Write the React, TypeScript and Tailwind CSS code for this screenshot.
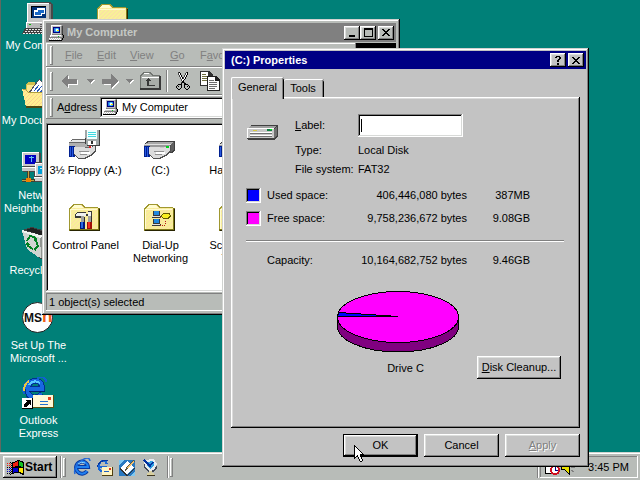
import type { ReactNode } from "react";

const raised =
  "shadow-[inset_-1px_-1px_0_#000,inset_1px_1px_0_#fff,inset_-2px_-2px_0_#808080,inset_2px_2px_0_#dcdedc]";
const frame =
  "shadow-[inset_-1px_-1px_0_#000,inset_1px_1px_0_#d0d2d0,inset_-2px_-2px_0_#808080,inset_2px_2px_0_#fff]";
const sunken =
  "shadow-[inset_-1px_-1px_0_#fff,inset_1px_1px_0_#808080,inset_-2px_-2px_0_#d8dad8,inset_2px_2px_0_#000]";
const thinSunken = "shadow-[inset_-1px_-1px_0_#fff,inset_1px_1px_0_#808080]";
const thinRaised = "shadow-[inset_-1px_-1px_0_#808080,inset_1px_1px_0_#fff]";

const palette: Record<string, string> = {
  k: "#000000",
  w: "#ffffff",
  g: "#808080",
  s: "#c0c0c0",
  d: "#404040",
  b: "#0000d0",
  n: "#000080",
  c: "#40c0f0",
  l: "#2878e0",
  r: "#f02010",
  e: "#10c020",
  y: "#ffe800",
  t: "#f0e8b0",
};

function Pixels({ rows, className = "" }: { rows: string[]; className?: string }) {
  const w = Math.max(...rows.map((r) => r.length));
  return (
    <svg
      width={w}
      height={rows.length}
      viewBox={`0 0 ${w} ${rows.length}`}
      shapeRendering="crispEdges"
      className={`shrink-0 ${className}`}
      aria-hidden="true"
    >
      {rows.flatMap((row, y) =>
        row
          .split("")
          .map((ch, x) =>
            palette[ch] ? <rect key={`${x}-${y}`} x={x} y={y} width={1} height={1} fill={palette[ch]} /> : null,
          ),
      )}
    </svg>
  );
}

function Art({ w = 32, h = 32, children }: { w?: number; h?: number; children: ReactNode }) {
  return (
    <svg width={w} height={h} viewBox={`0 0 ${w} ${h}`} shapeRendering="crispEdges" className="shrink-0" aria-hidden="true">
      {children}
    </svg>
  );
}

const closeRows = ["kk....kk", ".kk..kk.", "..kkkk..", "...kk...", "..kkkk..", ".kk..kk.", "kk....kk"];
const helpRows = [".kkkk.", "kk..kk", "....kk", "...kk.", "..kk..", "..kk..", "......", "..kk..", "..kk.."];
const maxRows = ["kkkkkkkkk", "kkkkkkkkk", "k.......k", "k.......k", "k.......k", "k.......k", "k.......k", "k.......k", "kkkkkkkkk"];
const minRows = ["......", "......", "......", "......", "......", "......", "......", "kkkkkk", "kkkkkk"];

const smallPcRows = [
  "..wwwwwwwwwwsg..",
  "..wsssssssssgd..",
  "..wsnnnnnnnsgd..",
  "..wsnllcclnsgd..",
  "..wsnlcwwcnsgd..",
  "..wsnlcwyynsgd..",
  "..wsnllcclnsgd..",
  "..wsnnnnnnnsgd..",
  "..wsssssssssgd..",
  "..wggggggggggk..",
  ".wwwwwwwwwwwsgk.",
  ".wsssssssesssgk.",
  ".gggggggggggggk.",
  "wswswswswswsgk..",
  "swswswswswswgk..",
  "kkkkkkkkkkkkk...",
];

const cursorRows = [
  "k..........",
  "kk.........",
  "kwk........",
  "kwwk.......",
  "kwwwk......",
  "kwwwwk.....",
  "kwwwwwk....",
  "kwwwwwwk...",
  "kwwwwwwwk..",
  "kwwwwwkkkk.",
  "kwwkwwk....",
  "kwkkwwk....",
  "kk..kwwk...",
  "k...kwwk...",
  ".....kwwk..",
  ".....kwwk..",
  "......kk...",
];

const cutRows = [
  "..dk......dk...",
  "..dwk....dwk...",
  "..dwk....dwk...",
  "...dwk..dwk....",
  "...dwk..dwk....",
  "....dwkdwk.....",
  "....dwkdwk.....",
  ".....dwwk......",
  ".....dwk.......",
  "......kk.......",
  ".....dkkd......",
  ".....k..kk.....",
  "..kkkk..kkkk...",
  ".k...k..k...k..",
  "k.k..k..k..k.k.",
  "k....k..k....k.",
  ".k..k....k..k..",
  "..kk......kk...",
];

const flagRows = [
  "..........kkk....",
  "........kkrkekkk.",
  "...k.kkkrrrkeeekk",
  "r.r.kkrrrrrkeeeek",
  "...r.krrrrrkeeeek",
  "r.r.kkrrrrrkeeeek",
  "...r.krrkkkkkkeek",
  "k.k.kkkkkkkkkkkkk",
  "...b.kbbbbbkyyyyk",
  "b.b.kkbbbbbkyyyyk",
  "...b.kbbbbbkyyyyk",
  "b.b.kkbbbbbkyyyyk",
  "...k.kbkkkkkkkyyk",
  "k.k.kkk......kkkk",
  "...k...........kk",
];

function Computer() {
  return (
    <Art>
      <path d="M8 0h20l3 2v20l-2 4H6V2z" fill="#484848" />
      <path d="M5 1h22v19H5z" fill="#c8c8c8" />
      <path d="M5 1h22v1H6v18H5z" fill="#fff" />
      <path d="M27 2h2v17h-2z" fill="#808080" />
      <path d="M9 4h15v12H9z" fill="#003078" />
      <path d="M9 4h15v1H10v11H9z" fill="#000" />
      <path d="M12 8h8v6h-8zM15 6h8v6h-8z" fill="#fff" />
      <path d="M13 10h6v3h-6zM16 8h6v3h-6z" fill="#1868c8" />
      <path d="M4 20h24v6H4z" fill="#b8b8b8" />
      <path d="M4 20h24v1H5v5H4z" fill="#fff" />
      <path d="M7 22h2v1H7z" fill="#00c000" />
      <path d="M18 22h8v1h-8zM18 24h8v1h-8z" fill="#606060" />
      <path d="M28 20h1v6h-1z" fill="#303030" />
      <path d="M3 26h24l-3 6H0z" fill="#404040" />
      <path d="M4 27.500h21M3 29.500h21M1 31h21" stroke="#e8e8e8" strokeDasharray="2 1" />
    </Art>
  );
}

function Dither({ id, a, b }: { id: string; a: string; b: string }) {
  return (
    <pattern id={id} width="4" height="4" patternUnits="userSpaceOnUse">
      <rect width="4" height="4" fill={a} />
      <path d="M0 0h1v1H0zM2 2h1v1H2zM3 1h1v1H3zM1 3h1v1H1z" fill={b} />
    </pattern>
  );
}

function Folder({ id, children }: { id: string; children?: ReactNode }) {
  return (
    <Art>
      <Dither id={id} a="#f8f098" b="#fcdca8" />
      <path d="M1 28V6l4-4h9l3 3h13v23z" fill={`url(#${id})`} />
      <path d="M1 28V6l4-4h9l3 3h13v1H16l-3-3H6L2 7v21z" fill="#a09830" />
      <path d="M2 7h27v1H3v19H2zM6 3h7l2 3H3z" fill="#fffcd0" />
      <path d="M1 27h29V6h2v23H1z" fill="#807818" />
      <path d="M2 28h29V7h1v22H2z" fill="#282400" />
      {children}
    </Art>
  );
}

function Documents() {
  return (
    <Art>
      <Dither id="docs" a="#fff090" b="#fcd090" />
      <path d="M4 28V8l2-3h7l2 3h14v20z" fill="#d0c050" />
      <path d="M5 8h8v12H5z" fill="#f8e890" />
      <path d="M6 16L17 2l13 11-5 8H8z" fill="#505060" />
      <path d="M8 16L17 3l11 11-3 6H9z" fill="#fff" />
      <path d="M12 14l5-6M14 16l6-7M17 17l5-6" stroke="#2858b8" strokeWidth="1" />
      <path d="M0 12h4l2 3h25l-3 15H4z" fill="url(#docs)" />
      <path d="M0 12h4l2 3h25v1H6l-2-3H1z" fill="#b0a040" />
      <path d="M4 29h24l3-14v3l-2 13H4z" fill="#504810" />
    </Art>
  );
}

function Network() {
  return (
    <Art>
      <path d="M1 0h16l2 2v18H1z" fill="#484848" />
      <path d="M0 0h17v14H0zM0 15h17v4H0z" fill="#c8c8c8" />
      <path d="M0 0h17v1H1v13H0zM0 15h17v1H0z" fill="#fff" />
      <path d="M3 3h11v9H3z" fill="#0000c0" />
      <path d="M7 5h5v1H7zM9 4h1v6H9z" fill="#60c0f0" />
      <path d="M13 10h17l2 2v18H12z" fill="#484848" />
      <path d="M13 11h16v13H13zM12 25h18v4H12z" fill="#d0d0d0" />
      <path d="M13 11h16v1H14v12h-1zM12 25h18v1H12z" fill="#fff" />
      <path d="M16 14h10v8H16z" fill="#00a0d8" />
      <path d="M18 16h5v1h-5z" fill="#c0f0ff" />
      <path d="M5 19h3v8h5v3H0v-3h5z" fill="#404030" />
      <path d="M6 19h1v9H6zM0 28h12v1H0z" fill="#c0a040" />
      <path d="M4 26h5v4H4z" fill="#f08000" />
    </Art>
  );
}

function Recycle() {
  return (
    <Art>
      <path d="M0 3l10-3 18 5-3 24-6 3L5 22z" fill="#404040" />
      <path d="M0 4l18 5 1 22-3-1L5 22z" fill="#d0d4d0" />
      <path d="M18 9l9-3-3 22-5 3z" fill="#909490" />
      <path d="M3 3l7-2 16 5-8 2z" fill="#202020" />
      <path d="M0 3l18 5 9-3v2l-9 4L0 5z" fill="#f0f4f0" />
      <path d="M5 14l3-5 4 1 2 3M14 14l2 5-3 3M11 22l-5-3-1-3" fill="none" stroke="#008020" strokeWidth="2" />
      <path d="M11 14h4v-4zM14 19v5l-3-2zM3 17l3-2 2 3z" fill="#008020" />
    </Art>
  );
}

function Msn() {
  return (
    <svg width="32" height="32" viewBox="0 0 32 32" className="shrink-0" aria-hidden="true">
      <circle cx="15.500" cy="15.500" r="15" fill="#fff" stroke="#202020" />
      <text x="2" y="20" fontSize="12" fontWeight="700" fill="#101010" fontFamily="Liberation Sans, sans-serif">
        MS
      </text>
      <text x="20" y="20" fontSize="17" fontWeight="700" fill="#f06018" fontFamily="Liberation Sans, sans-serif">
        n
      </text>
    </svg>
  );
}

function Globe() {
  return (
    <>
      <path d="M20 17Q13 24 7 18Q3 10 9 5Q20 1 20 12H6" fill="none" stroke="#003090" strokeWidth="6" />
      <path d="M20 17Q13 23 7 18Q3 10 9 5Q20 1 20 12H6" fill="none" stroke="#1868e0" strokeWidth="4" />
      <path d="M7 8q5-6 11-2" fill="none" stroke="#58c8ff" strokeWidth="2" />
      <path d="M7 14h16" stroke="#002070" />
      <path d="M2 17Q-1 8 8 3M15 1q9-3 9 4" fill="none" stroke="#1060d0" strokeWidth="2" />
      <path d="M2 14Q2 7 7 4" fill="none" stroke="#e8c840" strokeWidth="2" />
    </>
  );
}

function Outlook() {
  return (
    <Art>
      <Globe />
      <path d="M11 18h21v13H11z" fill="#605010" />
      <path d="M11 18h20v12H11z" fill="#fff8d8" />
      <path d="M18 24h8v1h-8zM18 27h8v1h-8z" fill="#2070d0" />
      <path d="M26 20h3v3h-3z" fill="#e84020" />
      <path d="M0 21h11v11H0z" fill="#000" />
      <path d="M0 21h10v10H0z" fill="#fff" />
      <path d="M2 30v-3l3-2-2-2h6v5l-2-1-3 3z" fill="#000" />
    </Art>
  );
}

function Hand() {
  return (
    <>
      <path d="M1 19h6v11H1z" fill="#002090" />
      <path d="M2 20h1v9H2zM4 20h1v10H4z" fill="#2858e0" />
      <path d="M6 20h6l7 1 9-3v6l-5 5-6 3h-7l-4-4z" fill="#505050" />
      <path d="M6 20h8l5 1 8-2v4l-5 5-6 3h-5l-5-4z" fill="#dcdcdc" />
      <path d="M11 24h10v1H11zM12 27h7v1h-7z" fill="#909090" />
      <path d="M13 25h9v2h-9z" fill="#fff" />
    </>
  );
}

function Floppy() {
  return (
    <Art>
      <path d="M1 15l4-3h16v10H1z" fill="#686868" />
      <path d="M1 15l4-2h16v2z" fill="#e8e8e8" />
      <path d="M1 16h22v4H1z" fill="#b0b0b0" />
      <Hand />
      <path d="M17 3h15v16H19l-2-2z" fill="#404040" />
      <path d="M17 3h14v15H18z" fill="#a0a8a8" />
      <path d="M19 3h10v9H19z" fill="#f0ffff" />
      <path d="M20 5h8v1h-8zM20 7h8v1h-8zM20 9h8v1h-8z" fill="#40d8e0" />
      <path d="M20 14h8v4h-8z" fill="#fff" />
      <path d="M23 14h2v3h-2z" fill="#303030" />
      <path d="M21 19h2v2h-2z" fill="#e02020" />
    </Art>
  );
}

function SharedDrive() {
  return (
    <Art>
      <path d="M1 17l4-3h26l1 1v8l-3 3H1z" fill="#404040" />
      <path d="M2 17l4-2h25l-3 2z" fill="#a8a8a8" />
      <path d="M1 17h27v8H1z" fill="#989898" />
      <path d="M28 17l3-2v8l-3 2z" fill="#606060" />
      <path d="M1 17h27v1H1z" fill="#e0e0e0" />
      <path d="M2 20h25v1H2z" fill="#c8c8c8" />
      <Hand />
      <path d="M23 19h3v2h-3z" fill="#00d020" />
    </Art>
  );
}

function Drive() {
  return (
    <Art w={31} h={15}>
      <path d="M0 4l4-4h26l1 1v10l-4 4H1l-1-1z" fill="#404040" />
      <path d="M1 3l3-2h26l-3 2z" fill="#a0a0a0" />
      <path d="M27 4l3-3v9l-3 3z" fill="#707070" />
      <path d="M0 3h27v10H0z" fill="#c8c8c8" />
      <path d="M0 3h27v1H1v9H0z" fill="#fff" />
      <path d="M3 7h22v1H3zM3 10h22v1H3z" fill="#fff" />
      <path d="M3 8h22v1H3zM3 11h22v1H3z" fill="#707070" />
      <path d="M6 5h4v1H6z" fill="#d8c840" />
      <path d="M20 4h5v2h-5z" fill="#108040" />
      <path d="M23 4h2v1h-2z" fill="#00f020" />
    </Art>
  );
}

function ControlPanel() {
  return (
    <Folder id="cp">
      <path d="M7 12l2-2h9v2h2V9h4v7h-4v-2h-4v2H7z" fill="#383838" />
      <path d="M8 12l2-1h8v3H8zM20 10h3v4h-3z" fill="#f0f0f0" />
      <path d="M13 14h3v7h-3zM20 14h3v7h-3z" fill="#a0a0a0" />
      <path d="M16 15h1v6h-1zM23 14h1v7h-1z" fill="#303030" />
      <path d="M12 20h5v7h-5z" fill="#001880" />
      <path d="M13 20h2v6h-2z" fill="#2868e0" />
      <path d="M19 20h5v7h-5z" fill="#a01008" />
      <path d="M20 20h2v6h-2z" fill="#f83020" />
    </Folder>
  );
}

function DialUp() {
  return (
    <Folder id="dun">
      {[9, 17].map((y) => (
        <g key={y}>
          <path d={`M10 ${y}h7v5h-7zM9 ${y + 5}h9v2H9z`} fill="#383838" />
          <path d={`M11 ${y}h5v4h-5z`} fill="#2088e0" />
          <path d={`M9 ${y + 5}h8v1H9z`} fill="#e0e0e0" />
        </g>
      ))}
      <path d="M17 15l4 1M17 23h5v-5" fill="none" stroke="#b02010" strokeDasharray="1 1" />
      <path d="M18 13l2-2h7l1 3-3 3h-5l-2-2z" fill="#605800" />
      <path d="M19 13l2-1h5l1 2-3 2h-4z" fill="#f8f020" />
    </Folder>
  );
}

function Scheduled() {
  return (
    <Folder id="sched">
      <path d="M9 11h14v14H9z" fill="#fff" />
      <path d="M9 11h14v3H9z" fill="#002090" />
    </Folder>
  );
}

type Item = { name: string[]; icon: ReactNode };

const desktopItems: Item[] = [
  { name: ["My Computer"], icon: <Computer /> },
  { name: ["My Documents"], icon: <Documents /> },
  { name: ["Network", "Neighborhood"], icon: <Network /> },
  { name: ["Recycle Bin"], icon: <Recycle /> },
  { name: ["Set Up The", "Microsoft ..."], icon: <Msn /> },
  { name: ["Outlook", "Express"], icon: <Outlook /> },
];

const computerItems: Item[] = [
  { name: ["3½ Floppy (A:)"], icon: <Floppy /> },
  { name: ["(C:)"], icon: <SharedDrive /> },
  { name: ["Hard Drive"], icon: <SharedDrive /> },
  { name: ["Control Panel"], icon: <ControlPanel /> },
  { name: ["Dial-Up", "Networking"], icon: <DialUp /> },
  { name: ["Scheduled", "Tasks"], icon: <Scheduled /> },
];

function IconButton({ item, iconClass = "" }: { item: Item; iconClass?: string }) {
  return (
    <button type="button" className="flex h-[75px] flex-col items-center">
      <span className={`block h-8 ${iconClass}`}>{item.icon}</span>
      <span className="mt-[5px] block leading-[13px] whitespace-nowrap">
        {item.name.map((line) => (
          <span key={line} className="block">
            {line}
          </span>
        ))}
      </span>
    </button>
  );
}

function CaptionButton({ label, rows, tone }: { label: string; rows: string[]; tone: string }) {
  return (
    <button type="button" aria-label={label} className={`flex h-[14px] w-4 items-center justify-center ${tone} ${raised}`}>
      <Pixels rows={rows} />
    </button>
  );
}

function Grip() {
  return <span className={`h-[19px] w-[3px] shrink-0 ${thinRaised}`} />;
}

function Arrow({ flip = false }: { flip?: boolean }) {
  return (
    <Art w={18} h={15}>
      <path d={flip ? "M17 8l-7-7v5H2v5h8v4z" : "M1 8l7-7v5h9v5H8v4z"} fill="#fff" />
      <path d={flip ? "M16 7L9 0v5H0v5h9v4z" : "M0 7l7-7v5h9v5H7v4z"} fill="#808080" />
    </Art>
  );
}

function Caret() {
  return (
    <Art w={8} h={5}>
      <path d="M1 1h7L4 5z" fill="#fff" />
      <path d="M0 0h7L3.500 4z" fill="#808080" />
    </Art>
  );
}

const menus = [
  { key: "F", rest: "ile", width: "w-8" },
  { key: "E", rest: "dit", width: "w-[33px]" },
  { key: "V", rest: "iew", width: "w-10" },
  { key: "G", rest: "o", width: "w-[30px]" },
];

function ComputerWindow() {
  return (
    <section
      aria-label="My Computer"
      className={`absolute top-[19px] left-[42px] w-[358px] bg-[#b8bcb8] p-1 ${frame}`}
    >
      <header className="flex h-[19px] items-center bg-[#808080] pr-[2px] pl-[3px] font-bold text-[#c4c8c4]">
        <Pixels rows={smallPcRows} />
        <h2 className="ml-[2px] flex-1">My Computer</h2>
        <CaptionButton label="Minimize" rows={minRows} tone="bg-[#b8bcb8]" />
        <CaptionButton label="Maximize" rows={maxRows} tone="bg-[#b8bcb8]" />
        <span className="w-[2px]" />
        <CaptionButton label="Close" rows={closeRows} tone="bg-[#b8bcb8]" />
      </header>
      <div className="mt-px flex">
        <nav className={`flex h-6 flex-1 items-center pl-1 text-[#808080] ${thinRaised}`}>
          <Grip />
          <div className="ml-3 flex">
            {menus.map((m) => (
              <button key={m.key} type="button" className={`text-left ${m.width}`}>
                <u>{m.key}</u>
                {m.rest}
              </button>
            ))}
            <button type="button">
              F<u>a</u>vorites
            </button>
          </div>
        </nav>
        <div className="w-10 bg-black" />
      </div>
      <div className={`flex h-7 items-center overflow-hidden pl-1 ${thinRaised}`}>
        <Grip />
        <button type="button" aria-label="Back" className="ml-2 flex items-center gap-2">
          <Arrow />
          <Caret />
        </button>
        <button type="button" aria-label="Forward" className="ml-[7px] flex items-center gap-[6px]">
          <Arrow flip />
          <Caret />
        </button>
        <button type="button" aria-label="Up" className="ml-[6px]">
          <Art w={21} h={18}>
            <path d="M1 16V4l2-3h7l3 3h6v12z" fill="#a8aca8" />
            <path d="M0 16V3l3-3h7l3 3h7v1h-8L9 1H4L1 4v12z" fill="#707470" />
            <path d="M2 5h17v1H2zM4 1h5v1H4z" fill="#fff" />
            <path d="M0 16h19V4h2v14H0z" fill="#383838" />
            <path d="M6 14h9v-1H9V9h2L8 6 5 9h2v5z" fill="#383838" />
          </Art>
        </button>
        <span className="ml-[5px] h-[22px] w-[2px] border-l border-[#808080] bg-white" />
        <button type="button" aria-label="Cut" className="ml-[8px]">
          <Pixels rows={cutRows} />
        </button>
        <button type="button" aria-label="Copy" className="ml-[9px]">
          <Art w={21} h={20}>
            <path d="M0 0h9l4 4v11H0z" fill="#303030" />
            <path d="M1 1h7v4h4v9H1z" fill="#fff" />
            <path d="M2 3h4v1H2zM2 5h5v1H2zM2 7h7v1H2zM2 9h7v1H2z" fill="#707040" />
            <path d="M7 5h9l4 4v11H7z" fill="#202020" />
            <path d="M8 6h7v4h4v9H8z" fill="#fff" />
            <path d="M9 9h5v1H9zM9 11h8v1H9zM9 13h8v1H9zM9 15h8v1H9zM9 17h6v1H9z" fill="#707070" />
          </Art>
        </button>
      </div>
      <div className={`flex h-6 items-center pr-[2px] pl-1 ${thinRaised}`}>
        <Grip />
        <label htmlFor="address" className="w-[43px] shrink-0 pl-1">
          A<u>d</u>dress
        </label>
        <div className={`ml-1 flex h-[21px] flex-1 items-center bg-white pl-[3px] ${sunken}`}>
          <Pixels rows={smallPcRows} />
          <select id="address" className="ml-[3px] w-full appearance-none bg-transparent outline-none">
            <option>My Computer</option>
          </select>
        </div>
      </div>
      <main
        className={`mt-1 grid min-h-[169px] grid-cols-[repeat(4,75px)] content-start overflow-hidden bg-white pt-1 pl-[2px] ${sunken}`}
      >
        {computerItems.slice(0, 3).map((item) => (
          <IconButton key={item.name[0]} item={item} iconClass="pr-[3px]" />
        ))}
        <span />
        {computerItems.slice(3).map((item) => (
          <IconButton key={item.name[0]} item={item} iconClass="pr-[3px]" />
        ))}
      </main>
      <footer className={`mt-px flex h-[18px] items-center pl-[3px] ${thinSunken}`}>1 object(s) selected</footer>
    </section>
  );
}

function PieChart() {
  return (
    <svg
      width="123"
      height="62"
      viewBox="0 0 123 62"
      shapeRendering="crispEdges"
      role="img"
      aria-label="Disk usage"
    >
      <path d="M.5 25.500v10a60.500 25.500 0 0 0 121 0v-10z" fill="#800080" stroke="#000" />
      <ellipse cx="61" cy="26" rx="60.500" ry="25.500" fill="#f0f" stroke="#000" />
      <path d="M61 25.500H.5L1.500 21.500z" fill="#00f" stroke="#000" />
    </svg>
  );
}

const usage = [
  { name: "Used space:", swatch: "bg-[#0000ff]", bytes: "406,446,080 bytes", size: "387MB" },
  { name: "Free space:", swatch: "bg-[#ff00ff]", bytes: "9,758,236,672 bytes", size: "9.08GB" },
];

const pushButton = "h-[23px] bg-[#c3c3c3]";

function PropertiesDialog() {
  return (
    <section
      role="dialog"
      aria-label="(C:) Properties"
      className={`absolute top-12 left-[222px] z-20 w-[367px] bg-[#c3c3c3] p-[3px] ${frame}`}
    >
      <header className="flex h-[18px] items-center gap-[2px] bg-[#000084] pr-[2px] pl-[6px] font-bold text-white">
        <h2 className="flex-1">(C:) Properties</h2>
        <CaptionButton label="Help" rows={helpRows} tone="bg-[#c3c3c3]" />
        <CaptionButton label="Close" rows={closeRows} tone="bg-[#c3c3c3]" />
      </header>
      <div className="px-[6px] pt-2 pb-[7px]">
        <div role="tablist" className="flex items-end">
          <button
            type="button"
            role="tab"
            aria-selected="true"
            className="relative z-10 -mb-[2px] h-[22px] w-[53px] rounded-t-[2px] bg-[#c3c3c3] pb-[2px] shadow-[inset_1px_0_0_#fff,inset_0_1px_0_#fff,inset_-1px_0_0_#000,inset_-2px_0_0_#808080]"
          >
            General
          </button>
          <button
            type="button"
            role="tab"
            aria-selected="false"
            className="h-[18px] w-10 rounded-t-[2px] pr-[2px] shadow-[inset_0_1px_0_#fff,inset_-1px_0_0_#000,inset_-2px_0_0_#808080]"
          >
            Tools
          </button>
        </div>
        <div
          role="tabpanel"
          className="pt-[17px] pr-4 pb-[49px] pl-[15px] shadow-[inset_-1px_-1px_0_#000,inset_1px_1px_0_#fff,inset_-2px_-2px_0_#808080,inset_2px_2px_0_#dcdcdc]"
        >
          <div className="flex">
            <div className="w-[49px] pt-[11px] pl-px">
              <Drive />
            </div>
            <div className="grid grid-cols-[63px_1fr] items-center">
              <label htmlFor="volume">
                <u>L</u>abel:
              </label>
              <div className="flex h-[23px] items-center">
                <input
                  id="volume"
                  type="text"
                  defaultValue=""
                  className={`h-[23px] w-[105px] bg-white px-1 outline-none ${sunken}`}
                />
                <span className="-ml-[102px] h-[13px] w-px bg-black" />
              </div>
              <span className="mt-1 leading-[19px]">Type:</span>
              <span className="mt-1 leading-[19px]">Local Disk</span>
              <span className="leading-[19px]">File system:</span>
              <span className="leading-[19px]">FAT32</span>
            </div>
          </div>
          <table className="mt-[5px] w-full table-fixed">
            <colgroup>
              <col className="w-[21px]" />
              <col className="w-20" />
              <col className="w-[120px]" />
              <col className="w-[63px]" />
              <col />
            </colgroup>
            <tbody>
              {usage.map((row) => (
                <tr key={row.name} className="h-[23px]">
                  <td>
                    <span className={`block h-[15px] w-[15px] ${row.swatch} ${sunken}`} />
                  </td>
                  <th className="text-left font-normal">{row.name}</th>
                  <td className="text-right">{row.bytes}</td>
                  <td className="text-right">{row.size}</td>
                  <td />
                </tr>
              ))}
            </tbody>
            <tfoot>
              <tr className="h-[19px]">
                <td colSpan={5} className="pt-[2px]">
                  <hr className="h-[2px] border-t border-[#808080] bg-white" />
                </td>
              </tr>
              <tr className="h-[23px]">
                <td />
                <th className="text-left font-normal">Capacity:</th>
                <td className="text-right">10,164,682,752 bytes</td>
                <td className="text-right">9.46GB</td>
                <td />
              </tr>
            </tfoot>
          </table>
          <div className="mt-[19px] flex items-end">
            <figure className="ml-[91px] w-[137px] pb-1">
              <PieChart />
              <figcaption className="mt-[9px] text-center">Drive C</figcaption>
            </figure>
            <button type="button" className={`mr-[3px] ml-auto w-[84px] ${pushButton} ${raised}`}>
              <u>D</u>isk Cleanup...
            </button>
          </div>
        </div>
        <div className="mt-[6px] flex justify-end gap-[6px]">
          <div className="relative">
            <button
              type="button"
              className={`w-[75px] ${pushButton} shadow-[inset_0_0_0_1px_#000,inset_-2px_-2px_0_#000,inset_2px_2px_0_#fff,inset_-3px_-3px_0_#808080,inset_3px_3px_0_#dcdcdc]`}
            >
              OK
            </button>
            <span className="absolute top-[11px] left-[11px]">
              <Pixels rows={cursorRows} />
            </span>
          </div>
          <button type="button" className={`w-[75px] ${pushButton} ${raised}`}>
            Cancel
          </button>
          <button
            type="button"
            disabled
            className={`w-[75px] text-[#808080] [text-shadow:1px_1px_0_#fff] ${pushButton} ${raised}`}
          >
            <u>A</u>pply
          </button>
        </div>
      </div>
    </section>
  );
}

function BrowserIcon() {
  return (
    <svg width={18} height={18} viewBox="0 0 18 18" className="shrink-0" aria-hidden="true">
      <path d="M14 13a6 6 0 1 1 1-4H4" fill="none" stroke="#0838a0" strokeWidth="4" />
      <path d="M14 13a6 6 0 1 1 1-4H4" fill="none" stroke="#2080f0" strokeWidth="2" />
      <path d="M2 16Q0 9 8 3T17 3" fill="none" stroke="#2068d8" strokeWidth="1.500" />
      <path d="M5 6q3-3 7-1" fill="none" stroke="#90d8ff" />
    </svg>
  );
}

function Divider() {
  return <span className="h-[22px] w-[2px] shrink-0 border-l border-[#808080] bg-white" />;
}

function Taskbar() {
  return (
    <footer className="flex h-7 items-center border-t border-[#d0d4d0] bg-[#b8bcb8] pt-px pr-[2px] pl-[3px] shadow-[inset_0_1px_0_#fff]">
      <button type="button" className={`flex h-[22px] w-[54px] items-center pl-1 font-bold ${raised}`}>
        <Pixels rows={flagRows} />
        <span className="ml-px text-[12px]">Start</span>
      </button>
      <span className="w-[3px]" />
      <Divider />
      <span className="w-px" />
      <Grip />
      <nav className="ml-[7px] flex items-center">
        <button type="button" aria-label="Internet Explorer" className="w-6">
          <BrowserIcon />
        </button>
        <button type="button" aria-label="Outlook Express" className="w-[22px]">
          <Art w={16} h={17}>
            <path d="M10 8H2M10 5Q8 1 5 2T2 8t5 4" fill="none" stroke="#1868d8" strokeWidth="2" />
            <path d="M0 8Q2 1 11 1" fill="none" stroke="#0838a0" />
            <path d="M5 8h11v9H5z" fill="#504010" />
            <path d="M5 8h10v8H5z" fill="#fff4c0" />
            <path d="M7 12h5v1H7z" fill="#2060c0" />
            <path d="M12 9h2v2h-2z" fill="#e03020" />
          </Art>
        </button>
        <button type="button" aria-label="Show Desktop" className="w-6">
          <Art w={17} h={17}>
            <path d="M0 1h16v16H0z" fill="#2878c0" />
            <path d="M0 1h5L0 6zM16 17h-5l5-5z" fill="#80c8f0" />
            <path d="M1 9l7-7 7 6-7 8z" fill="#fff" />
            <path d="M1 9l7 7 8-8v2l-8 7-7-6z" fill="#303030" />
            <path d="M6 12l1-3 7-8 2 1-7 8z" fill="#605840" />
            <path d="M8 9l6-7 1 1-6 7z" fill="#f0c070" />
          </Art>
        </button>
        <button type="button" aria-label="View Channels" className="w-5">
          <Art w={14} h={17}>
            <path d="M1 1l10-1 3 5-3 7-5 1-4-3z" fill="#e8ecf0" />
            <path d="M1 3l2 6 4 3 4-1 3-5v3l-3 4H6L1 9z" fill="#404858" />
            <path d="M3 3l7-1 1 4-3 4-4-3z" fill="#30a0e0" />
            <path d="M1 1l6 6 3-4" fill="none" stroke="#0030a0" strokeWidth="1.500" />
            <path d="M6 12h3v2h2v2H4v-2h2z" fill="#d8d0a0" />
            <path d="M4 16h8v1H4z" fill="#403820" />
          </Art>
        </button>
      </nav>
      <span className="w-1" />
      <Divider />
      <span className="w-px" />
      <Grip />
      <span className="flex-1" />
      <Divider />
      <div className={`ml-px flex h-[22px] w-[98px] items-center pl-[5px] ${thinSunken}`}>
        <Art w={15} h={16}>
          <path d="M0 2h9v12H0z" fill="#fff" stroke="#000" />
          <circle cx="10" cy="11" r="4" fill="#fff" stroke="#d01020" strokeWidth="2" />
          <path d="M10 8h1v3h2v1h-3z" fill="#000080" />
        </Art>
        <Art w={18} h={16}>
          <path d="M1 6h3l5-5v14L4 10H1z" fill="#e8e000" stroke="#000" />
          <path d="M11 5l3-2M11 8h4M11 11l3 2" stroke="#808080" />
        </Art>
        <time className="ml-auto pr-[9px]">3:45 PM</time>
      </div>
    </footer>
  );
}

export default function App() {
  return (
    <div className="relative flex min-h-screen flex-col overflow-hidden bg-[#008078] font-['Liberation_Sans',Arial,sans-serif] text-[11px] leading-[13px] text-black">
      <div className="flex flex-1 border-l border-[#606860] pt-[2px]">
        <div className="flex w-[75px] flex-col text-white">
          {desktopItems.map((item) => (
            <IconButton key={item.name[0]} item={item} iconClass="pr-px" />
          ))}
        </div>
        <div className="w-[75px] pl-5">
          <Folder id="desk" />
        </div>
      </div>
      <ComputerWindow />
      <PropertiesDialog />
      <Taskbar />
    </div>
  );
}
